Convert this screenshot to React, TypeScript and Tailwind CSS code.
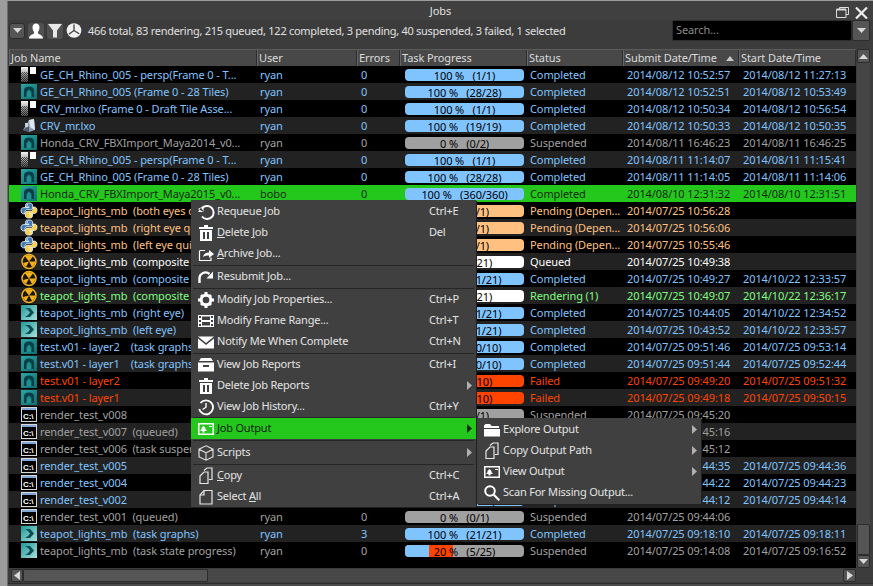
import React from "react";

type Kind = "render" | "maya" | "lux" | "py" | "nuke" | "max" | "cmd";
type Tone = "blue" | "gray" | "sel" | "orange" | "white" | "green" | "red";

type Job = {
  kind: Kind;
  name: string;
  user: string;
  errors: string;
  label: string;
  bar: string;
  status: string;
  submit: string;
  start: string;
  tone: Tone;
};

const toneText: Record<Tone, string> = {
  blue: "text-[#80c4ff]",
  gray: "text-[#a0a0a0]",
  sel: "text-[#162a12]",
  orange: "text-[#ffc080]",
  white: "text-[#ffffff]",
  green: "text-[#80ff80]",
  red: "text-[#ff4400]",
};

const barColor: Record<string, string> = {
  blue: "bg-[#80c4ff]",
  gray: "bg-[#a0a0a0]",
  orange: "bg-[#ffc080]",
  white: "bg-[#ffffff]",
  red: "bg-[#ff4400]",
};

const j = (
  kind: Kind,
  name: string,
  user: string,
  errors: string,
  label: string,
  bar: string,
  status: string,
  submit: string,
  start: string,
  tone: Tone
): Job => ({ kind, name, user, errors, label, bar, status, submit, start, tone });

const jobs: Job[] = [
  j("render", "GE_CH_Rhino_005 - persp(Frame 0 - T...", "ryan", "0", "100 %   (1/1)", "blue", "Completed", "2014/08/12 10:52:57", "2014/08/12 11:27:13", "blue"),
  j("maya", "GE_CH_Rhino_005 (Frame 0 - 28 Tiles)", "ryan", "0", "100 %   (28/28)", "blue", "Completed", "2014/08/12 10:52:51", "2014/08/12 10:53:49", "blue"),
  j("render", "CRV_mr.lxo (Frame 0 - Draft Tile Asse...", "ryan", "0", "100 %   (1/1)", "blue", "Completed", "2014/08/12 10:50:34", "2014/08/12 10:56:54", "blue"),
  j("lux", "CRV_mr.lxo", "ryan", "0", "100 %   (19/19)", "blue", "Completed", "2014/08/12 10:50:33", "2014/08/12 10:50:35", "blue"),
  j("maya", "Honda_CRV_FBXImport_Maya2014_v0...", "ryan", "0", "0 %   (0/2)", "gray", "Suspended", "2014/08/11 16:46:23", "2014/08/11 16:46:25", "gray"),
  j("render", "GE_CH_Rhino_005 - persp(Frame 0 - T...", "ryan", "0", "100 %   (1/1)", "blue", "Completed", "2014/08/11 11:14:07", "2014/08/11 11:15:41", "blue"),
  j("maya", "GE_CH_Rhino_005 (Frame 0 - 28 Tiles)", "ryan", "0", "100 %   (28/28)", "blue", "Completed", "2014/08/11 11:14:05", "2014/08/11 11:14:06", "blue"),
  j("maya", "Honda_CRV_FBXImport_Maya2015_v0...", "bobo", "0", "100 %   (360/360)", "blue", "Completed", "2014/08/10 12:31:32", "2014/08/10 12:31:51", "sel"),
  j("py", "teapot_lights_mb  (both eyes quick)", "ryan", "0", "0 %   (0/1)", "orange", "Pending (Depen...", "2014/07/25 10:56:28", "", "orange"),
  j("py", "teapot_lights_mb  (right eye quick)", "ryan", "0", "0 %   (0/1)", "orange", "Pending (Depen...", "2014/07/25 10:56:06", "", "orange"),
  j("py", "teapot_lights_mb  (left eye quick)", "ryan", "0", "0 %   (0/1)", "orange", "Pending (Depen...", "2014/07/25 10:55:46", "", "orange"),
  j("nuke", "teapot_lights_mb  (composite both)", "ryan", "0", "0 %   (0/21)", "white", "Queued", "2014/07/25 10:49:38", "", "white"),
  j("nuke", "teapot_lights_mb  (composite right)", "ryan", "0", "100 %   (21/21)", "blue", "Completed", "2014/07/25 10:49:27", "2014/10/22 12:33:57", "blue"),
  j("nuke", "teapot_lights_mb  (composite left)", "ryan", "0", "5 %   (1/21)", "white", "Rendering (1)", "2014/07/25 10:49:07", "2014/10/22 12:36:17", "green"),
  j("max", "teapot_lights_mb  (right eye)", "ryan", "0", "100 %   (21/21)", "blue", "Completed", "2014/07/25 10:44:05", "2014/10/22 12:34:52", "blue"),
  j("max", "teapot_lights_mb  (left eye)", "ryan", "0", "100 %   (21/21)", "blue", "Completed", "2014/07/25 10:43:52", "2014/10/22 12:33:57", "blue"),
  j("maya", "test.v01 - layer2    (task graphs)", "ryan", "0", "100 %   (10/10)", "blue", "Completed", "2014/07/25 09:51:46", "2014/07/25 09:53:14", "blue"),
  j("maya", "test.v01 - layer1    (task graphs)", "ryan", "0", "100 %   (10/10)", "blue", "Completed", "2014/07/25 09:51:44", "2014/07/25 09:52:44", "blue"),
  j("maya", "test.v01 - layer2", "ryan", "0", "0 %   (0/10)", "red", "Failed", "2014/07/25 09:49:20", "2014/07/25 09:51:32", "red"),
  j("maya", "test.v01 - layer1", "ryan", "0", "0 %   (0/10)", "red", "Failed", "2014/07/25 09:49:18", "2014/07/25 09:50:15", "red"),
  j("cmd", "render_test_v008", "ryan", "0", "0 %   (0/1)", "gray", "Suspended", "2014/07/25 09:45:20", "", "gray"),
  j("cmd", "render_test_v007  (queued)", "ryan", "0", "0 %   (0/1)", "gray", "Suspended", "2014/07/25 09:45:16", "", "gray"),
  j("cmd", "render_test_v006  (task suspended)", "ryan", "0", "0 %   (0/1)", "gray", "Suspended", "2014/07/25 09:45:12", "", "gray"),
  j("cmd", "render_test_v005", "ryan", "0", "100 %   (1/1)", "blue", "Completed", "2014/07/25 09:44:35", "2014/07/25 09:44:36", "blue"),
  j("cmd", "render_test_v004", "ryan", "0", "100 %   (1/1)", "blue", "Completed", "2014/07/25 09:44:22", "2014/07/25 09:44:23", "blue"),
  j("cmd", "render_test_v002", "ryan", "0", "100 %   (1/1)", "blue", "Completed", "2014/07/25 09:44:12", "2014/07/25 09:44:14", "blue"),
  j("cmd", "render_test_v001  (queued)", "ryan", "0", "0 %   (0/1)", "gray", "Suspended", "2014/07/25 09:44:06", "", "gray"),
  j("max", "teapot_lights_mb  (task graphs)", "ryan", "3", "100 %   (21/21)", "blue", "Completed", "2014/07/25 09:18:10", "2014/07/25 09:18:11", "blue"),
  j("max", "teapot_lights_mb  (task state progress)", "ryan", "0", "20 %   (5/25)", "split", "Suspended", "2014/07/25 09:14:08", "2014/07/25 09:16:52", "gray"),
];

function JobIcon({ kind }: { kind: Kind }) {
  if (kind === "render") {
    return (
      <svg width="18" height="17" viewBox="0 0 18 17" className="shrink-0">
        <defs>
          <linearGradient id="rg" x1="0" y1="0" x2="0" y2="1">
            <stop offset="0" stopColor="#f4f4f4" />
            <stop offset="1" stopColor="#555" />
          </linearGradient>
          <pattern id="rp" width="2" height="2" patternUnits="userSpaceOnUse">
            <rect width="1" height="1" fill="#000" />
            <rect x="1" y="1" width="1" height="1" fill="#000" />
          </pattern>
        </defs>
        <rect x="1" y="1" width="7" height="15" fill="url(#rg)" />
        <rect x="1" y="6" width="7" height="10" fill="url(#rp)" opacity="0.6" />
        <rect x="10" y="1" width="6" height="7" fill="#fff" />
      </svg>
    );
  }
  if (kind === "maya") {
    return (
      <svg width="18" height="17" viewBox="0 0 18 17" className="shrink-0">
        <defs>
          <linearGradient id="mg" x1="0" y1="0" x2="1" y2="1">
            <stop offset="0" stopColor="#2aa7a5" />
            <stop offset="1" stopColor="#0e6d70" />
          </linearGradient>
        </defs>
        <rect x="1" y="1" width="16" height="15" fill="url(#mg)" />
        <path d="M4 14V7.5C4 5 6 3.5 9 3.5S14 5 14 7.5V14H11.5V9L9 6.5 6.5 9V14Z" fill="#0b3f47" />
        <path d="M9 8.5L11 11V14H7V11Z" fill="#24918f" />
      </svg>
    );
  }
  if (kind === "lux") {
    return (
      <svg width="18" height="17" viewBox="0 0 18 17" className="shrink-0">
        <path d="M3 13L9 3 14 2 15 13 9 15Z" fill="#8f9cb3" />
        <path d="M9 3L14 2 15 13 10 10Z" fill="#dfe6f2" />
        <path d="M3 13L9 9 9 15Z" fill="#4d5a70" />
        <path d="M5 6H8V10H5Z" fill="#c4cfe0" />
      </svg>
    );
  }
  if (kind === "py") {
    return (
      <svg width="18" height="17" viewBox="0 0 18 17" className="shrink-0">
        <path d="M8.8 1C5.6 1 5.5 2.4 5.5 3.2V5H9V5.6H3.6C2.1 5.6 1 6.8 1 8.7S2 11.9 3.5 11.9H5V9.9C5 8.6 6 7.7 7.2 7.7H10.8C11.8 7.7 12.6 6.9 12.6 5.9V3.2C12.6 2 11.4 1 8.8 1Z" fill="#3f7cb5" stroke="#fff" strokeWidth="0.8" />
        <path d="M9.2 16C12.4 16 12.5 14.6 12.5 13.8V12H9V11.4H14.4C15.9 11.4 17 10.2 17 8.3S16 5.1 14.5 5.1H13V7.1C13 8.4 12 9.3 10.8 9.3H7.2C6.2 9.3 5.4 10.1 5.4 11.1V13.8C5.4 15 6.6 16 9.2 16Z" fill="#f6cf45" stroke="#fff" strokeWidth="0.8" />
        <circle cx="7.2" cy="3" r="0.8" fill="#fff" />
        <circle cx="10.8" cy="14" r="0.8" fill="#fff" />
      </svg>
    );
  }
  if (kind === "nuke") {
    return (
      <svg width="18" height="17" viewBox="0 0 18 17" className="shrink-0">
        <circle cx="9" cy="8.5" r="7" fill="#1a1505" stroke="#f2b01e" strokeWidth="1.5" />
        <path d="M9 8.5L5 3.6A6.4 6.4 0 0 1 13 3.6ZM9 8.5H15.2A6.4 6.4 0 0 1 12 14ZM9 8.5L6 14A6.4 6.4 0 0 1 3 10Z" fill="#f2b01e" />
      </svg>
    );
  }
  if (kind === "max") {
    return (
      <svg width="18" height="17" viewBox="0 0 18 17" className="shrink-0">
        <defs>
          <linearGradient id="xg" x1="0" y1="0" x2="1" y2="1">
            <stop offset="0" stopColor="#1c9a98" />
            <stop offset="1" stopColor="#a8e0de" />
          </linearGradient>
        </defs>
        <rect x="1" y="1" width="16" height="15" fill="url(#xg)" />
        <path d="M5 4H10L14 8.5 10 13H5L8 11 10 8.5 8 6Z" fill="#0d4c53" />
      </svg>
    );
  }
  return (
    <svg width="18" height="17" viewBox="0 0 18 17" className="shrink-0">
      <rect x="1.5" y="1.5" width="15" height="14" fill="#000" stroke="#d8d8d8" />
      <rect x="2" y="2" width="14" height="2" fill="#7fa6d8" />
      <text x="3" y="12.5" fontSize="8" fontWeight="700" fontFamily="'Liberation Sans', sans-serif" fill="#fff">
        C:\
      </text>
    </svg>
  );
}

function Progress({ job }: { job: Job }) {
  return (
    <div className="relative ml-[5px] mt-[3px] h-3 w-[119px] overflow-hidden rounded-[4px] text-black">
      {job.bar === "split" ? (
        <div className="flex h-full bg-[#a0a0a0]">
          <div className="w-6 bg-[#80c4ff]" />
          <div className="w-6 bg-[#ff4400]" />
        </div>
      ) : (
        <div className={`h-full ${barColor[job.bar]}`} />
      )}
      <div className="absolute inset-0 flex items-center justify-center whitespace-pre leading-none">{job.label}</div>
    </div>
  );
}

function Row({ job, index }: { job: Job; index: number }) {
  const selected = job.tone === "sel";
  // rows 8-25 sit under the context menu in these two columns
  const covered = index >= 8 && index <= 25;
  const bg = selected ? "bg-[#24c81c]" : index % 2 ? "bg-[#222222]" : "bg-black";
  return (
    <div className={`flex h-[17px] whitespace-pre leading-[17px] ${bg} ${toneText[job.tone]}`}>
      <div className="flex w-[248px] shrink-0 overflow-hidden pl-[11px]">
        <JobIcon kind={job.kind} />
        <span className="ml-[2px]">{job.name}</span>
      </div>
      <div className="w-[100px] shrink-0 pl-[3px]">{covered ? "" : job.user}</div>
      <div className="w-[43px] shrink-0 pl-1">{covered ? "" : job.errors}</div>
      <div className="w-[127px] shrink-0">
        <Progress job={job} />
      </div>
      <div className="w-[96px] shrink-0 overflow-hidden pl-[3px]">{job.status}</div>
      <div className="w-[116px] shrink-0 pl-1">{job.submit}</div>
      <div className="w-[117px] shrink-0 pl-1">{job.start}</div>
    </div>
  );
}

function Head({ w, children, sorted }: { w: string; children: string; sorted?: boolean }) {
  return (
    <div className={`relative flex h-full shrink-0 items-center border-r border-[#2c2c2c] pl-[2px] shadow-[inset_1px_0_0_#666] ${w}`}>
      {children}
      {sorted && (
        <svg width="8" height="5" viewBox="0 0 8 5" className="absolute right-[4px] top-[6px]">
          <path d="M0 5L4 0 8 5Z" fill="#c8c8c8" />
        </svg>
      )}
    </div>
  );
}

const Tri = ({ dir = "down", className = "" }: { dir?: "down" | "up" | "left" | "right"; className?: string }) => {
  const d = { down: "M0 0H9L4.5 5Z", up: "M0 5H9L4.5 0Z", left: "M6 0V9L0 4.5Z", right: "M0 0V9L6 4.5Z" }[dir];
  const horiz = dir === "left" || dir === "right";
  return (
    <svg width={horiz ? 6 : 9} height={horiz ? 9 : 5} viewBox={horiz ? "0 0 6 9" : "0 0 9 5"} className={className}>
      <path d={d} fill="#d8d8d8" />
    </svg>
  );
};

const Ico = ({ children }: { children: React.ReactNode }) => (
  <svg width="18" height="18" viewBox="0 0 18 18" className="shrink-0" fill="#ffffff" stroke="none">
    {children}
  </svg>
);

const icons: Record<string, React.ReactNode> = {
  requeue: (
    <Ico>
      <path d="M5 5.5A6.5 6.5 0 1 1 5 13.5" fill="none" stroke="#fff" strokeWidth="2" />
      <path d="M1 9H7L4 4.5Z M1 6L6.5 3V9Z" />
    </Ico>
  ),
  trash: (
    <Ico>
      <path d="M7 1H11V3H16V5H2V3H7Z M3 6H15V17H3Z" />
      <path d="M6 8H8V15H6Z M10 8H12V15H10Z" fill="#404040" />
    </Ico>
  ),
  archive: (
    <Ico>
      <path d="M2.5 6V15.5H14V12.5 M2.5 5.5H8" fill="none" stroke="#fff" strokeWidth="1.2" />
      <path d="M6 12C6.5 9 9 7.5 12 7.5V5L17 9L12 13V10.5C10 10.5 7.5 10.5 6 12Z" />
    </Ico>
  ),
  resubmit: (
    <Ico>
      <path d="M2.5 15V10.5A6 6 0 0 1 12.5 6" fill="none" stroke="#fff" strokeWidth="2.4" />
      <path d="M16 3.5V10.5H9.5Z" />
    </Ico>
  ),
  gear: (
    <Ico>
      <circle cx="9" cy="9" r="4.8" fill="none" stroke="#fff" strokeWidth="3" />
      <path d="M7.5 1H10.5V4H7.5Z M7.5 14H10.5V17H7.5Z M1 7.5H4V10.5H1Z M14 7.5H17V10.5H14Z M3 5L5 3 7 5 5 7Z M13 3L15 5 13 7 11 5Z M3 13L5 11 7 13 5 15Z M13 11L15 13 13 15 11 13Z" />
    </Ico>
  ),
  film: (
    <Ico>
      <path d="M1 3H17V15H1ZM2 4V6H4V4ZM2 8V10H4V8ZM2 12V14H4V12ZM14 4V6H16V4ZM14 8V10H16V8ZM14 12V14H16V12ZM5 4.5V8H13V4.5ZM5 10V13.500H13V10Z" fillRule="evenodd" />
    </Ico>
  ),
  mail: (
    <Ico>
      <path d="M1 3.500H17L9 10Z M1 5.500L9 12 17 5.500V15.500H1Z" />
    </Ico>
  ),
  report: (
    <Ico>
      <path d="M4 2H14L16 5H2Z" />
      <path d="M1 6.500H17V15.500H1ZM6 9V11H12V9Z" fillRule="evenodd" />
    </Ico>
  ),
  history: (
    <Ico>
      <path d="M3.500 5A7 7 0 1 1 2.200 11" fill="none" stroke="#fff" strokeWidth="1.8" />
      <path d="M8.300 5H9.700V9.500L6 12 5.200 11 8.300 9Z" />
    </Ico>
  ),
  image: (
    <Ico>
      <path d="M1 3H17V15H1ZM2.500 4.500V13.500H15.500V4.500Z" fillRule="evenodd" />
      <path d="M3 12.500H7.500V11H10L8 8.500 9 8.500 6.500 6 4 8.500 5 8.500 3 11H5.500V12.500Z M12 6H15V7H12Z" />
    </Ico>
  ),
  cube: (
    <Ico>
      <path d="M9 1.800L16 5.200V12.800L9 16.200 2 12.800V5.200ZM2 5.200L9 8.800 16 5.200M9 8.800V16.200" fill="none" stroke="#d8d8d8" strokeWidth="1.200" />
    </Ico>
  ),
  copy: (
    <Ico>
      <path d="M7 3.500L10 1H15V12.500H12M3 9L7 5H11V16.500H3Z" fill="none" stroke="#e8e8e8" strokeWidth="1.200" />
    </Ico>
  ),
  page: (
    <Ico>
      <path d="M7 2.500H15V16H3V7Z" fill="none" stroke="#e8e8e8" strokeWidth="1.200" />
      <path d="M7 2.500V7H3" fill="none" stroke="#e8e8e8" strokeWidth="1.200" />
    </Ico>
  ),
  folder: (
    <Ico>
      <path d="M1 4.500L2.500 3H7L8.500 5H16V7H1Z" />
      <path d="M1 8H17V15.500H1Z" />
    </Ico>
  ),
  search: (
    <Ico>
      <circle cx="7" cy="7" r="4.800" fill="none" stroke="#fff" strokeWidth="2" />
      <path d="M10 11.500L11.500 10 17 15.500 15.500 17Z" />
    </Ico>
  ),
};

function MenuItem({
  icon,
  children,
  shortcut,
  arrow,
  active,
}: {
  icon: string;
  children: React.ReactNode;
  shortcut?: string;
  arrow?: boolean;
  active?: boolean;
}) {
  return (
    <div className={`relative flex h-[21px] items-center pl-[6px] tracking-[-0.2px] ${active ? "bg-[#24c81c] text-[#142410]" : "text-[#e4e4e4]"}`}>
      {icons[icon]}
      <span className="ml-[2px] whitespace-pre">{children}</span>
      {shortcut && <span className="absolute left-[238px]">{shortcut}</span>}
      {arrow && (
        <svg width="5" height="9" viewBox="0 0 5 9" className="absolute right-[4px] top-[6px]">
          <path d="M0 0V9L5 4.500Z" fill={active ? "#10300c" : "#b0b0b0"} />
        </svg>
      )}
    </div>
  );
}

const Sep = () => (
  <div className="flex h-[2px] items-center px-[2px]">
    <div className="h-px w-full bg-[#262626]" />
  </div>
);

export default function App() {
  return (
    <div className="flex h-[586px] w-[873px] overflow-hidden bg-[#9c9c9c] pt-px font-['Noto_Sans',sans-serif] text-[11px] tracking-[-0.1px] text-[#e0e0e0]">
      <div className="w-2 shrink-0 border-r border-[#6c6c6c]" />
      <div className="relative flex min-w-0 flex-1 flex-col bg-[#3c3c3c]">
        {/* title bar */}
        <div className="relative flex h-[19px] shrink-0 items-center justify-center bg-[#404040] pt-px">
          <span>Jobs</span>
          <svg width="13" height="11" viewBox="0 0 13 11" className="absolute left-[828px] top-[6px]">
            <path d="M3.500 2.500V0.500H12.500V7.500H10M0.500 2.500H10V10.500H0.500Z" fill="none" stroke="#dcdcdc" />
            <path d="M0.500 2.500H10" stroke="#dcdcdc" strokeWidth="2" />
          </svg>
          <svg width="13" height="12" viewBox="0 0 13 12" className="absolute left-[847px] top-[6px]">
            <path d="M1 0.500L12 11.500M12 0.500L1 11.500" stroke="#ececec" strokeWidth="2.200" />
          </svg>
        </div>

        {/* toolbar */}
        <div className="mb-2 flex h-[21px] shrink-0 items-center pl-px">
          <button className="flex h-4 w-4 items-center justify-center rounded-[3px] border border-[#2c2c2c] bg-[#555555]">
            <Tri />
          </button>
          <div className="ml-[3px] flex h-4 w-4 items-center justify-center rounded-[3px] bg-[#505050]">
            <svg width="16" height="16" viewBox="0 0 16 16">
              <path d="M8 0.500C5.500 0.500 4.500 2.500 4.500 4.500S5.500 8.500 6 9V10.500C5 11.500 1 12 1 15.500H15C15 12 11 11.500 10 10.500V9C10.500 8.500 11.500 6.500 11.500 4.500S10.500 0.500 8 0.500Z" fill="#fff" />
            </svg>
          </div>
          <div className="ml-[3px] flex h-4 w-4 items-center justify-center rounded-[3px] bg-[#505050]">
            <svg width="16" height="15" viewBox="0 0 16 15">
              <path d="M1 1H15L10 7.500V14.500H6V7.500Z" fill="#e8e8e8" />
            </svg>
          </div>
          <div className="ml-[3px] flex h-4 w-4 items-center justify-center">
            <svg width="17" height="17" viewBox="0 0 17 17">
              <circle cx="8.500" cy="8.500" r="7.800" fill="#f0f0f0" />
              <path d="M8.500 2V8.500L3 12.500M8.500 8.500L14 12" fill="none" stroke="#404040" strokeWidth="1.400" />
            </svg>
          </div>
          <div className="ml-[6px] whitespace-pre pt-px tracking-[-0.28px]">466 total, 83 rendering, 215 queued, 122 completed, 3 pending, 40 suspended, 3 failed, 1 selected</div>
          <div className="ml-auto flex h-[21px] w-[180px] items-center rounded-[2px] border border-[#2c2c2c] bg-black pl-[3px] text-[#8a8a8a]">Search...</div>
          <button className="mr-[3px] flex h-[21px] w-[18px] items-center justify-center rounded-[2px] border border-[#2c2c2c] bg-[#555555]">
            <Tri />
          </button>
        </div>

        {/* table + vertical scrollbar */}
        <div className="flex min-h-0 flex-1 pl-px">
          <div className="flex w-[847px] shrink-0 flex-col">
            <div className="flex h-[17px] shrink-0 border-t border-[#5c5c5c] bg-[#484848] text-[#dcdcdc]">
              <Head w="w-[248px]">Job Name</Head>
              <Head w="w-[100px]">User</Head>
              <Head w="w-[43px]">Errors</Head>
              <Head w="w-[127px]">Task Progress</Head>
              <Head w="w-[96px]">Status</Head>
              <Head w="w-[116px]" sorted>
                Submit Date/Time
              </Head>
              <Head w="w-[117px]">Start Date/Time</Head>
            </div>
            <div className="h-[502px] shrink-0 overflow-hidden bg-black">
              {jobs.map((job, i) => (
                <Row key={i} job={job} index={i} />
              ))}
            </div>
          </div>
          <div className="flex w-[17px] shrink-0 flex-col items-start pl-px">
            <div className="flex h-[14px] w-[13px] items-center justify-center rounded-[2px] border border-[#2c2c2c] bg-[#555555]">
              <Tri dir="up" />
            </div>
            <div className="min-h-0 w-[13px] flex-1 bg-[#454545]" />
            <div className="h-[31px] w-[13px] rounded-[2px] border border-[#2c2c2c] bg-[#555555]" />
            <div className="flex h-[13px] w-[13px] items-center justify-center rounded-[2px] border border-[#2c2c2c] bg-[#555555]">
              <Tri />
            </div>
          </div>
        </div>

        {/* horizontal scrollbar */}
        <div className="flex h-[15px] shrink-0 items-start pl-[3px] pt-px">
          <div className="flex h-[13px] w-[12px] items-center justify-center rounded-[2px] border border-[#2c2c2c] bg-[#555555]">
            <Tri dir="left" />
          </div>
          <div className="h-[13px] w-[185px] rounded-[2px] border border-[#2c2c2c] bg-[#555555]" />
          <div className="h-[13px] flex-1 bg-[#484848]" />
          <div className="mr-[17px] flex h-[13px] w-[13px] items-center justify-center rounded-[2px] border border-[#2c2c2c] bg-[#555555]">
            <Tri dir="right" />
          </div>
        </div>
        <div className="h-[3px] shrink-0 border-t border-[#2c2c2c] bg-[#4a4a4a]" />

        {/* context menu */}
        <div className="absolute left-[183px] top-[199px] w-[285px] bg-[#404040] pt-px shadow-[1px_1px_0_#202020]">
          <MenuItem icon="requeue" shortcut="Ctrl+E">Requeue Job</MenuItem>
          <MenuItem icon="trash" shortcut="Del"><u>D</u>elete <u>J</u>ob</MenuItem>
          <MenuItem icon="archive"><u>A</u>rchive <u>J</u>ob...</MenuItem>
          <Sep />
          <MenuItem icon="resubmit">Resubmit Job...</MenuItem>
          <Sep />
          <MenuItem icon="gear" shortcut="Ctrl+P">Modify Job Properties...</MenuItem>
          <MenuItem icon="film" shortcut="Ctrl+T">Modify Frame Range...</MenuItem>
          <MenuItem icon="mail" shortcut="Ctrl+N">Notify Me When Complete</MenuItem>
          <Sep />
          <MenuItem icon="report" shortcut="Ctrl+I">View Job Reports</MenuItem>
          <MenuItem icon="trash" arrow>Delete Job Reports</MenuItem>
          <MenuItem icon="history" shortcut="Ctrl+Y">View Job History...</MenuItem>
          <div className="flex h-px items-center px-[2px]">
            <div className="h-px w-full bg-[#262626]" />
          </div>
          <MenuItem icon="image" active arrow>Job Output</MenuItem>
          <div className="flex h-[3px] items-center px-[2px]">
            <div className="h-px w-full bg-[#262626]" />
          </div>
          <MenuItem icon="cube" arrow>Scripts</MenuItem>
          <Sep />
          <MenuItem icon="copy" shortcut="Ctrl+C"><u>C</u>opy</MenuItem>
          <MenuItem icon="page" shortcut="Ctrl+A">Select <u>A</u>ll</MenuItem>
        </div>

        {/* job output submenu */}
        <div className="absolute left-[469px] top-[417px] w-[224px] bg-[#404040] py-px shadow-[1px_1px_0_#202020]">
          <MenuItem icon="folder" arrow>Explore Output</MenuItem>
          <MenuItem icon="copy" arrow>Copy Output Path</MenuItem>
          <MenuItem icon="image" arrow>View Output</MenuItem>
          <MenuItem icon="search">Scan For Missing Output...</MenuItem>
        </div>
      </div>
    </div>
  );
}
